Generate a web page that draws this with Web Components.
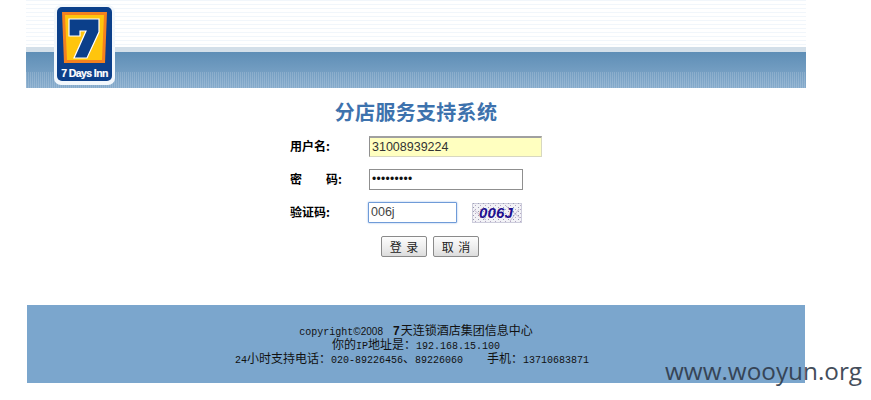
<!DOCTYPE html>
<html lang="zh">
<head>
<meta charset="utf-8">
<title>分店服务支持系统</title>
<style>
html,body{margin:0;padding:0;background:#fff;height:400px;overflow:hidden}
body{font-family:"Liberation Sans","Noto Sans CJK SC",sans-serif;position:relative}
</style>
</head>
<body>
<login-page></login-page>
<water-mark>www.wooyun.org</water-mark>

<template id="t-page">
<style>
:host{display:block;width:871px;height:400px}
.title{padding:13px 0 0 26px;height:35px;width:780px}
h1{margin:0;text-align:center;font:bold 20px/22px "Noto Sans CJK SC",sans-serif;letter-spacing:.3px;color:#3d72ad}
.form{display:flex;flex-direction:column;width:400px;margin-left:290px}
.btns{display:flex;gap:6px;margin:13px 0 0 91px}
</style>
<site-header></site-header>
<div class="title"><h1>分店服务支持系统</h1></div>
<div class="form">
  <form-row label="用户名:" style="height:33px"><text-field kind="user" style="width:173px">31008939224</text-field></form-row>
  <form-row label="密&emsp;&emsp;码:" style="height:33px"><text-field kind="pass" style="width:154px">•••••••••</text-field></form-row>
  <form-row label="验证码:" style="height:21px"><text-field kind="focus" style="width:89px">006j</text-field><captcha-img>006J</captcha-img></form-row>
  <div class="btns"><push-button>登 录</push-button><push-button>取 消</push-button></div>
</div>
<site-footer></site-footer>
</template>

<template id="t-header">
<style>
:host{display:block;width:780px;height:88px;margin-left:26px;box-sizing:border-box;padding:5px 0 0 28px;
background:
 repeating-linear-gradient(90deg,rgba(255,255,255,.16) 0 1px,transparent 1px 2px) 0 72px/100% 16px no-repeat,
 linear-gradient(#d3dfe9,#d3dfe9) 0 47px/100% 5px no-repeat,
 linear-gradient(#5e8eb6,#86abcc) 0 52px/100% 36px no-repeat,
 repeating-linear-gradient(#f1f6fb 0 1px,#fff 1px 4px);}
svg{display:block}
.t{font:bold 10.5px "Liberation Sans",sans-serif;fill:#fff;stroke:#fff;stroke-width:.2;letter-spacing:-.6px}
</style>
<svg width="61" height="80" viewBox="0 0 61 80">
 <rect x="0" y="0" width="61" height="80" rx="7" fill="#f2f7fc"/>
 <rect x="3" y="2" width="55" height="74" rx="5" fill="#0b3f8a"/>
 <path d="M8 7H53L51 58H10Z" fill="#f4811f"/>
 <path d="M11 10H50L48 55H13Z" fill="#ffc50d"/>
 <path d="M15 14H45V27L33 53H20L32 26H26V31H15Z" fill="#0b3f8a" stroke="#fff" stroke-width="1.2"/>
 <text class="t" x="30.5" y="72" text-anchor="middle">7 Days Inn</text>
</svg>
</template>

<template id="t-row">
<style>
:host{display:flex;align-items:flex-start}
.l{width:79px;font:bold 12px/19px "Noto Sans CJK SC",sans-serif;color:#000;white-space:pre}
.c{display:flex;align-items:flex-start}
</style>
<div class="l"></div><div class="c"><slot></slot></div>
</template>

<template id="t-field">
<style>
:host{display:block;flex:none;height:21px;box-sizing:border-box;border:1px solid #8f8f8f;background:#fff;color:#333;font:12.5px/19px "Liberation Sans",sans-serif;padding-left:2px;overflow:hidden;white-space:nowrap}
:host([kind=user]){background:#ffffc0;border-color:#a0a0a0 #d8d8c0 #d8d8c0 #909090;border-width:2px 1px 1px 1px;line-height:18px}
:host([kind=pass]){color:#111;font-size:12px;letter-spacing:.3px}
:host([kind=focus]){border:1px solid #6f9bd8;box-shadow:0 0 2px #8db2e6;border-radius:1px;margin-left:-1px;color:#444}
</style>
<slot></slot>
</template>

<template id="t-captcha">
<style>
:host{display:block;flex:none;width:50px;height:20px;margin:1px 0 0 15px;position:relative;background:#f2f2f6}
svg{position:absolute;inset:0}
span{position:relative;display:block;text-align:center;padding-right:2px;font:italic bold 15px/20px "Liberation Sans",sans-serif;color:#1f0f8f;letter-spacing:.2px}
</style>
<svg width="50" height="20" viewBox="0 0 50 20">
 <defs><pattern id="n" width="5" height="4" patternUnits="userSpaceOnUse"><rect x="1" y="0" width="1" height="1" fill="#9a9ab0"/><rect x="3" y="2" width="1" height="1" fill="#b5a8c4"/></pattern></defs>
 <rect width="50" height="20" fill="url(#n)"/>
 <rect x=".5" y=".5" width="49" height="19" fill="none" stroke="#a9a9c2" stroke-dasharray="1 1"/>
 <path d="M2 7L14 17M34 3L48 15M38 18L47 6" stroke="#a898bc" stroke-width=".6" fill="none"/>
</svg>
<span><slot></slot></span>
</template>

<template id="t-button">
<style>
:host{display:block;width:46px;height:21px;box-sizing:border-box;border:1px solid #8a8a8a;border-radius:2px;background:linear-gradient(#fdfdfd,#ececec 60%,#dcdcdc);color:#222;font:12px/19px "Noto Sans CJK SC",sans-serif;text-align:center;word-spacing:2px}
</style>
<slot></slot>
</template>

<template id="t-footer">
<style>
:host{display:block;box-sizing:border-box;width:778px;height:78px;margin:48px 0 0 27px;padding-top:18px;background:#7ba6cd;color:#111;font:12px/14px "Noto Sans CJK SC",sans-serif;text-align:center}
b{font-weight:normal;font-family:"Liberation Mono",monospace;font-size:10px}
.line{height:14px;white-space:pre}
.l3{padding-right:8px}
.s{font-family:"Liberation Sans",sans-serif;font-size:10px}
strong{font-family:"Liberation Sans",sans-serif;margin:0 1px 0 10px}
</style>
<div class="line"><b>copyright</b><span class="s">©2008</span><strong>7</strong>天连锁酒店集团信息中心</div>
<div class="line">你的<b>IP</b>地址是：<b>192.168.15.100</b></div>
<div class="line l3"><b>24</b>小时支持电话：<b>020-89226456</b>、<b>89226060</b><b>    </b>手机：<b>13710683871</b></div>
</template>

<template id="t-mark">
<style>
:host{position:absolute;left:665px;top:355px;font:24.3px/32px "Open Sans",sans-serif;color:#2f3a4a;opacity:.9;white-space:nowrap}
</style>
<slot></slot>
</template>

<script>
function reg(name, tpl, init){
  customElements.define(name, class extends HTMLElement{
    constructor(){
      super();
      this.attachShadow({mode:"open"}).appendChild(document.getElementById(tpl).content.cloneNode(true));
    }
    connectedCallback(){ if(init) init(this); }
  });
}
reg("site-header","t-header");
reg("site-footer","t-footer");
reg("text-field","t-field");
reg("captcha-img","t-captcha");
reg("push-button","t-button");
reg("water-mark","t-mark");
reg("form-row","t-row",el=>{ el.shadowRoot.querySelector(".l").textContent=el.getAttribute("label"); });
reg("login-page","t-page");
</script>
</body>
</html>
